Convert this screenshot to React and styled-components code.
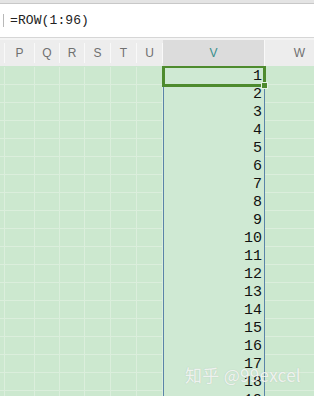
import React from 'react';
import styled, { createGlobalStyle } from 'styled-components';

const GlobalStyle = createGlobalStyle`
  html, body {
    margin: 0;
    padding: 0;
    background: #ffffff;
    overflow: hidden;
  }
`;

const COLS = [
  { key: 'edge', label: '', width: 5 },
  { key: 'P', label: 'P', width: 30 },
  { key: 'Q', label: 'Q', width: 25 },
  { key: 'R', label: 'R', width: 25 },
  { key: 'S', label: 'S', width: 26 },
  { key: 'T', label: 'T', width: 26 },
  { key: 'U', label: 'U', width: 26 },
  { key: 'V', label: 'V', width: 102 },
  { key: 'W', label: 'W', width: 70 },
];

const template = COLS.map((c) => c.width + 'px').join(' ');
const ROWS = Array.from({ length: 20 }, (_, i) => i + 1);

const Sheet = styled.div`
  position: relative;
  width: 314px;
  height: 396px;
  overflow: hidden;
  display: flex;
  flex-direction: column;
  background: #cce8cf;
`;

const TopStrip = styled.div`
  height: 3px;
  background: #e4e4e4;
  border-bottom: 1px solid #c8c8c8;
`;

const FormulaBar = styled.div`
  height: 33px;
  background: #ffffff;
  border-bottom: 1px solid #d6d6d6;
  display: flex;
  align-items: center;
  gap: 6px;
  padding-left: 3px;
`;

const Divider = styled.span`
  width: 1px;
  height: 13px;
  background: #b8b8b8;
`;

const Formula = styled.span`
  font-family: "Liberation Mono", "DejaVu Sans Mono", monospace;
  font-size: 13px;
  color: #222222;
  letter-spacing: 0.1px;
`;

const HeaderRow = styled.div`
  display: grid;
  grid-template-columns: ${template};
  height: 26px;
  background: #ededed;
  border-top: 2px solid #f4f4f4;
  flex-shrink: 0;
`;

const HeadCell = styled.div`
  display: flex;
  align-items: center;
  justify-content: center;
  font-family: "Liberation Sans", Arial, sans-serif;
  font-size: 12px;
  color: ${({ $active }) => ($active ? '#3a8f8c' : '#707070')};
  background: ${({ $active }) => ($active ? '#dcdcdc' : 'transparent')};
  border-right: 1px solid #f9f9f9;
  margin: ${({ $active }) => ($active ? '0' : '3px 0')};
`;

const Body = styled.div`
  flex: 1;
  display: grid;
  grid-template-columns: ${template};
  grid-auto-rows: 18px;
  overflow: hidden;
  padding-top: 1px;
`;

const Cell = styled.div`
  position: relative;
  z-index: ${({ $sel }) => ($sel ? 2 : 0)};
  box-sizing: border-box;
  background: ${({ $col }) => ($col === 'V' ? '#cfe9d3' : '#cce8cf')};
  border-right: ${({ $col }) => ($col === 'V' ? '1px solid #5a84a8' : '1px solid #dbeedc')};
  border-left: ${({ $col }) => ($col === 'V' ? '1px solid #5a84a8' : 'none')};
  border-bottom: ${({ $col }) => ($col === 'V' ? 'none' : '1px solid #dbeedc')};
  display: flex;
  align-items: flex-end;
  justify-content: flex-end;
  padding-right: 2px;
  font-family: "Liberation Mono", "DejaVu Sans Mono", monospace;
  font-size: 15px;
  line-height: 16px;
  color: #111111;
`;

const Selected = styled.div`
  position: absolute;
  left: -2px;
  top: -2px;
  right: -2px;
  bottom: -2px;
  border: 3px solid #4e8b2e;
  pointer-events: none;
`;

const Handle = styled.div`
  position: absolute;
  right: -5px;
  bottom: -5px;
  width: 5px;
  height: 5px;
  background: #4e8b2e;
  border: 1px solid #e6f3e6;
`;

const Watermark = styled.div`
  position: absolute;
  left: 185px;
  top: 362px;
  font-family: "Noto Sans CJK SC", "Liberation Sans", sans-serif;
  font-size: 17px;
  color: rgba(255, 255, 255, 0.8);
  text-shadow: 0 0 1px rgba(120, 120, 120, 0.35);
  letter-spacing: 0.3px;
  z-index: 3;
`;

export default function App() {
  return (
    <>
      <GlobalStyle />
      <Sheet>
        <TopStrip />
        <FormulaBar>
          <Divider />
          <Formula>=ROW(1:96)</Formula>
        </FormulaBar>
        <HeaderRow>
          {COLS.map((c) => (
            <HeadCell key={c.key} $active={c.key === 'V'}>
              {c.label}
            </HeadCell>
          ))}
        </HeaderRow>
        <Body>
          {ROWS.map((r) =>
            COLS.map((c) => {
              const sel = c.key === 'V' && r === 1;
              return (
                <Cell key={r + c.key} $col={c.key} $sel={sel}>
                  {c.key === 'V' ? r : null}
                  {sel && (
                    <Selected>
                      <Handle />
                    </Selected>
                  )}
                </Cell>
              );
            })
          )}
        </Body>
        <Watermark>知乎 @99excel</Watermark>
      </Sheet>
    </>
  );
}
